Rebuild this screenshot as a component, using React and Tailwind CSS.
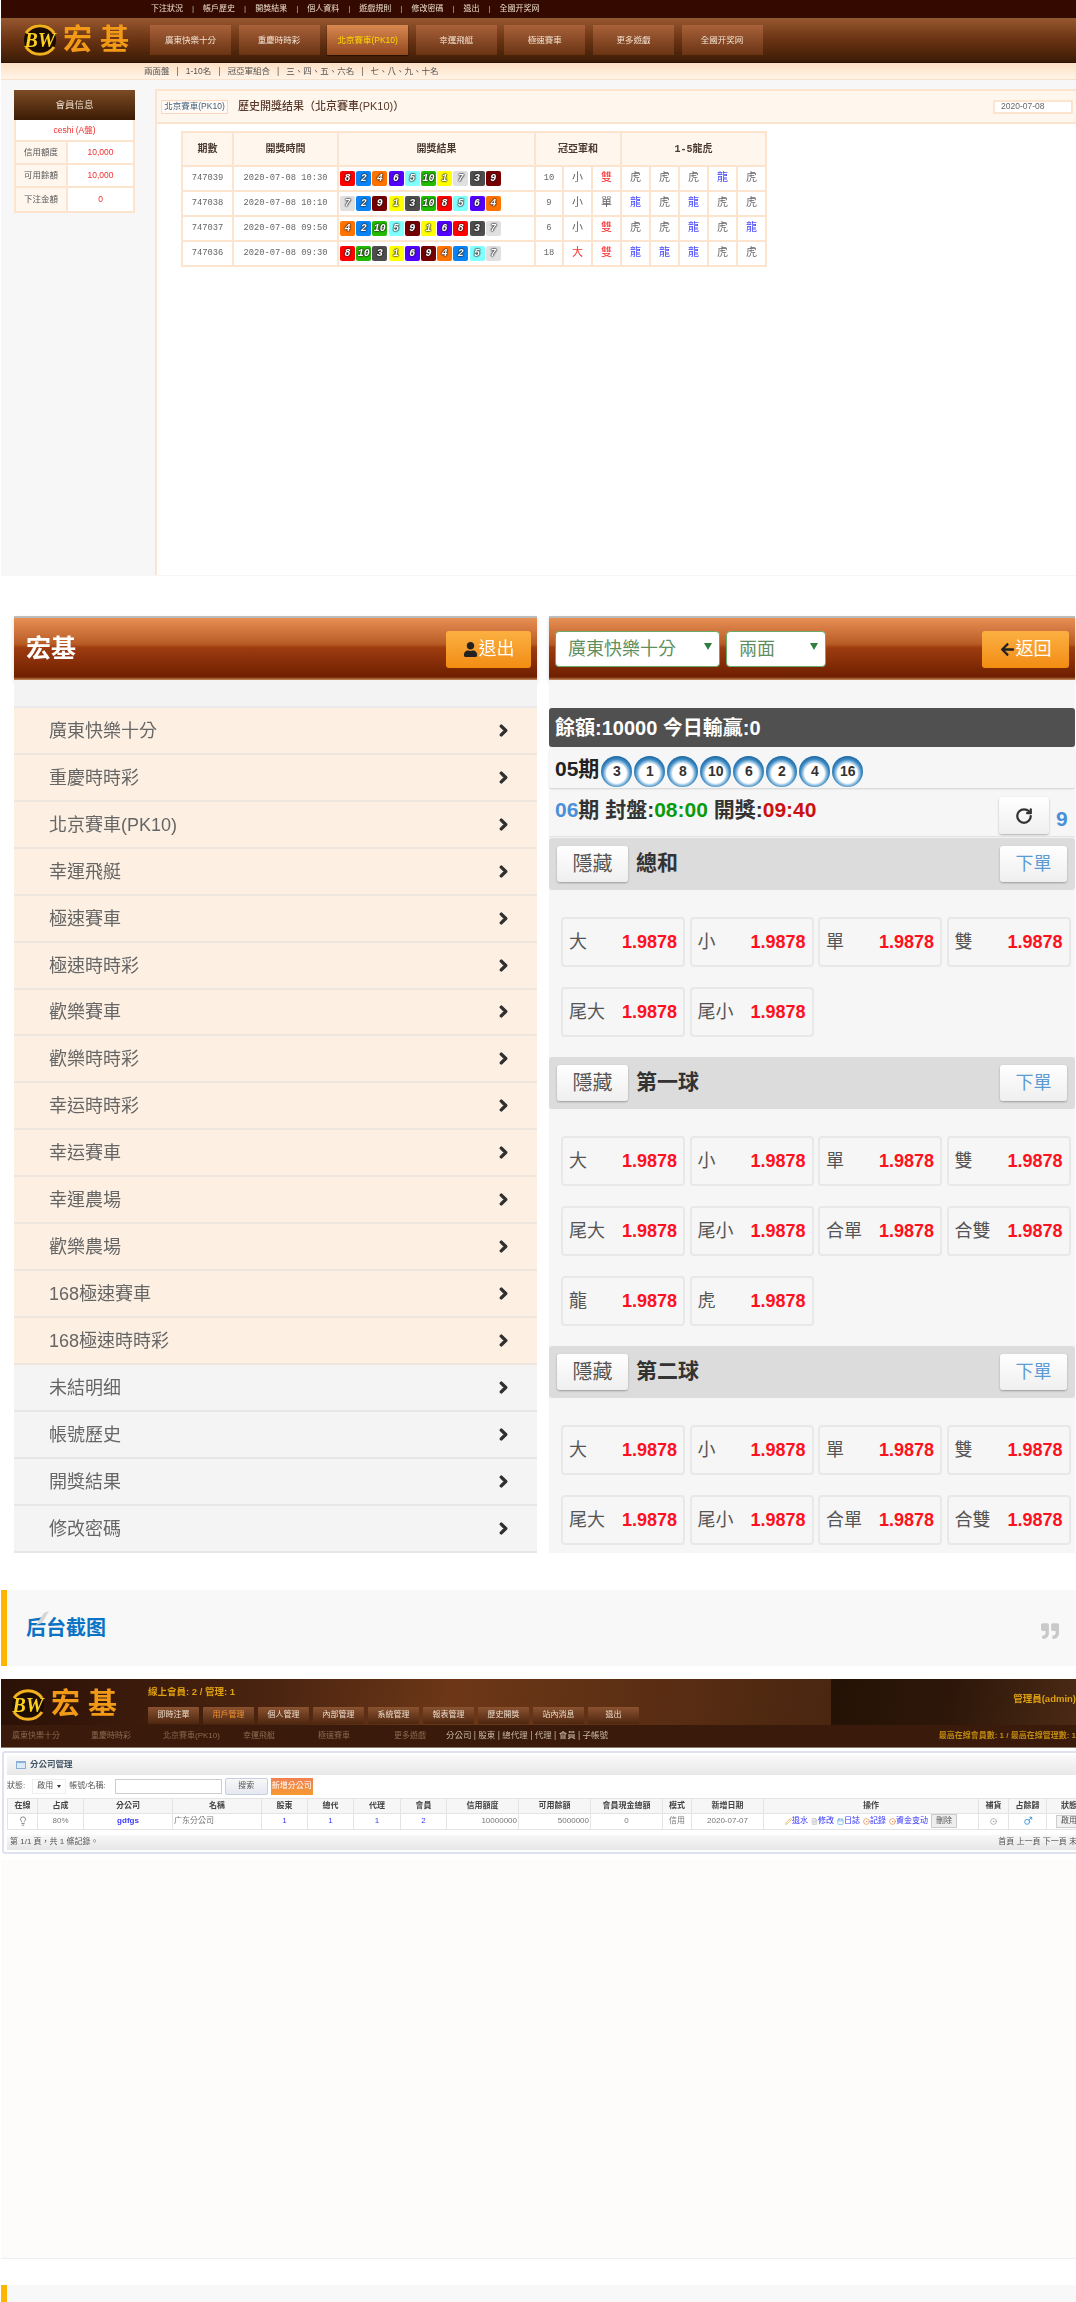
// App.jsx
import React from "react";
import { FaUser, FaArrowLeft, FaChevronRight, FaQuoteRight } from "react-icons/fa";
import { RotateCw, Lightbulb, Mars, Pencil, FileText, Calendar, CircleDot } from "lucide-react";

const BALL_COLORS = {
  1: "bg-[#ffff00]",
  2: "bg-[#0a84f5]",
  3: "bg-[#4d4d4d]",
  4: "bg-[#ff7300]",
  5: "bg-[#80ffff]",
  6: "bg-[#5200ff]",
  7: "bg-[#e0e0e0]",
  8: "bg-[#ff0000]",
  9: "bg-[#760000]",
  10: "bg-[#22bb00]",
};

const DRAWS = [
  { id: "747039", time: "2020-07-08 10:30", balls: [8, 2, 4, 6, 5, 10, 1, 7, 3, 9], sum: "10", size: "小", odd: "雙", dt: ["虎", "虎", "虎", "龍", "虎"] },
  { id: "747038", time: "2020-07-08 10:10", balls: [7, 2, 9, 1, 3, 10, 8, 5, 6, 4], sum: "9", size: "小", odd: "單", dt: ["龍", "虎", "龍", "虎", "虎"] },
  { id: "747037", time: "2020-07-08 09:50", balls: [4, 2, 10, 5, 9, 1, 6, 8, 3, 7], sum: "6", size: "小", odd: "雙", dt: ["虎", "虎", "龍", "虎", "龍"] },
  { id: "747036", time: "2020-07-08 09:30", balls: [8, 10, 3, 1, 6, 9, 4, 2, 5, 7], sum: "18", size: "大", odd: "雙", dt: ["龍", "龍", "龍", "虎", "虎"] },
];

const TOP_LINKS = ["下注狀況", "帳戶歷史", "開獎結果", "個人資料", "遊戲規則", "修改密碼", "退出", "全國开奖网"];
const NAV = ["廣東快樂十分", "重慶時時彩", "北京賽車(PK10)", "幸運飛艇", "極速賽車", "更多遊戲", "全國开奖网"];
const SUB_NAV = ["兩面盤", "1-10名", "冠亞軍組合", "三、四、五、六名", "七、八、九、十名"];

const MENU = [
  "廣東快樂十分", "重慶時時彩", "北京賽車(PK10)", "幸運飛艇", "極速賽車", "極速時時彩", "歡樂賽車",
  "歡樂時時彩", "幸运時時彩", "幸运賽車", "幸運農場", "歡樂農場", "168極速賽車", "168極速時時彩",
];
const MENU_GREY = ["未結明细", "帳號歷史", "開獎結果", "修改密碼"];

const ADMIN_NAV = ["即時注單", "用戶管理", "個人管理", "內部管理", "系統管理", "報表管理", "歷史開獎", "站內消息", "退出"];

function Logo({ size = 36, textClass }) {
  return (
    <div className="flex items-center gap-[5px]">
      <svg width={size} height={size} viewBox="0 0 36 36" className="shrink-0">
        <circle cx="18" cy="18" r="16" fill="#1a0c02" />
        <path d="M4 11 A17 17 0 0 1 32 11" fill="none" stroke="#f2b01e" strokeWidth="3" />
        <path d="M4 25 A17 17 0 0 0 32 25" fill="none" stroke="#f2b01e" strokeWidth="3" />
        <text x="18" y="25" textAnchor="middle" fontSize="20" fontWeight="700" fontStyle="italic" fill="#fbd01e" fontFamily="Liberation Serif, serif">BW</text>
      </svg>
      <span className={textClass}>宏 基</span>
    </div>
  );
}

function Ball({ n }) {
  return (
    <span className={`flex h-[15px] w-[15px] items-center justify-center rounded-[2px] text-[10px] font-bold italic text-white [text-shadow:0_0_1px_#000,0_0_2px_#222,0_0_2px_#222] ${BALL_COLORS[n]}`}>
      {n}
    </span>
  );
}

function HistoryTable() {
  const cell = "border-2 border-[#fde4ce] text-center";
  return (
    <table className="ml-[24px] mt-[7px] w-[584px] table-fixed border-collapse font-['Liberation_Mono','Noto_Sans_CJK_TC',monospace] text-[8.75px] text-[#666]">
      <colgroup>
        <col className="w-[51px]" />
        <col className="w-[105px]" />
        <col className="w-[197px]" />
        <col className="w-[28px]" />
        <col className="w-[29px]" />
        <col className="w-[29px]" />
        <col className="w-[29px]" />
        <col className="w-[29px]" />
        <col className="w-[29px]" />
        <col className="w-[29px]" />
        <col className="w-[29px]" />
      </colgroup>
      <thead>
        <tr className="h-[34px] bg-[#fff6ee] text-[10px] font-bold text-[#4a3a30]">
          <th className={cell}>期數</th>
          <th className={cell}>開獎時間</th>
          <th className={cell}>開獎結果</th>
          <th className={cell} colSpan={3}>冠亞軍和</th>
          <th className={cell} colSpan={5}>1-5龍虎</th>
        </tr>
      </thead>
      <tbody>
        {DRAWS.map((d) => (
          <tr key={d.id} className="h-[25px] bg-white">
            <td className={cell}>{d.id}</td>
            <td className={cell}>{d.time}</td>
            <td className={cell}>
              <div className="flex gap-[1.2px] pl-[1px]">
                {d.balls.map((b) => (
                  <Ball key={b} n={b} />
                ))}
              </div>
            </td>
            <td className={cell}>{d.sum}</td>
            <td className={`${cell} text-[11px] ${d.size === "大" ? "text-[#ff3030]" : ""}`}>{d.size}</td>
            <td className={`${cell} text-[11px] ${d.odd === "雙" ? "text-[#ff3030]" : ""}`}>{d.odd}</td>
            {d.dt.map((x, i) => (
              <td key={i} className={`${cell} text-[11px] ${x === "龍" ? "text-[#4a4aff]" : ""}`}>{x}</td>
            ))}
          </tr>
        ))}
      </tbody>
    </table>
  );
}

function SiteShot() {
  return (
    <section className="ml-px h-[576px] bg-[#f7f7f7] blur-[0.4px]">
      <div className="flex h-[17px] items-center gap-[9px] bg-[#340a00] pl-[150px] text-[8px] text-[#ecdcc8]">
        {TOP_LINKS.map((l, i) => (
          <React.Fragment key={l}>
            {i > 0 && <span className="text-[#bba]">|</span>}
            <span>{l}</span>
          </React.Fragment>
        ))}
      </div>

      <div className="flex h-[46px] items-center border-y border-[#2c1003] bg-gradient-to-b from-[#97582f] via-[#6a3313] to-[#3c1c06] pl-[21px]">
        <div className="w-[128px]">
          <Logo textClass="text-[29px] leading-none font-bold text-[#f29a18]" />
        </div>
        <div className="flex gap-[7.6px]">
          {NAV.map((n, i) =>
            i === 2 ? (
              <div key={n} className="flex h-[30px] w-[81px] items-center justify-center bg-gradient-to-b from-[#d98850] to-[#93491f] text-[8.5px] text-[#ffd800] shadow-[0_1px_1px_#2a1000]">{n}</div>
            ) : (
              <div key={n} className="flex h-[30px] w-[81px] items-center justify-center bg-gradient-to-b from-[#a9623a] to-[#6a3414] text-[8.5px] text-[#f3e2d2]">{n}</div>
            ),
          )}
        </div>
      </div>

      <div className="flex h-[17px] items-center gap-[7px] border-b border-[#fbe0c8] bg-gradient-to-b from-[#fde0c4] to-[#fff4e8] pl-[143px] text-[8.5px] text-[#555]">
        {SUB_NAV.map((l, i) => (
          <React.Fragment key={l}>
            {i > 0 && <span>|</span>}
            <span>{l}</span>
          </React.Fragment>
        ))}
      </div>

      <div className="flex">
        <aside className="w-[154px] pl-[13px] pt-[10px]">
          <div className="w-[121px] border-x-2 border-b-2 border-[#fde4ce] text-[8.5px]">
            <div className="-mx-[2px] flex h-[30px] items-center justify-center bg-gradient-to-b from-[#7d4c24] to-[#3c1c06] text-[9.5px] text-[#eadccc]">會員信息</div>
            <div className="flex h-[22px] items-center justify-center border-b-2 border-[#fde4ce] bg-white text-[#f03030]">ceshi (A盤)</div>
            {[["信用額度", "10,000"], ["可用餘額", "10,000"], ["下注金額", "0"]].map(([k, v], i) => (
              <div key={k} className={`grid h-[23px] grid-cols-[52px_1fr] ${i < 2 ? "border-b-2 border-[#fde4ce]" : ""}`}>
                <div className="flex items-center justify-center border-r-2 border-[#fde4ce] bg-[#fff6ee] text-[#555]">{k}</div>
                <div className="flex items-center justify-center bg-white text-[#f03030]">{v}</div>
              </div>
            ))}
          </div>
        </aside>

        <main className="mt-[9px] h-[486px] flex-1 border-l-2 border-t-2 border-[#fde4ce] bg-white">
          <div className="flex h-[33px] items-center border-b-2 border-[#fde4ce] bg-[#fff6ee] pl-[4px] pr-[3px]">
            <span className="flex h-[14px] w-[67px] items-center justify-center border border-[#fbd8bc] bg-[#fffaf5] text-[8.5px] text-[#3f5f7f]">北京賽車(PK10)</span>
            <span className="ml-[10px] text-[11px] font-medium text-[#5a3a2a]">歷史開獎结果（北京賽車(PK10)）</span>
            <span className="ml-auto flex h-[14px] w-[80px] items-center border-2 border-[#fde4ce] bg-white pl-[6px] text-[8.5px] text-[#666]">2020-07-08</span>
          </div>
          <HistoryTable />
        </main>
      </div>
    </section>
  );
}

function MobileHeader({ children }) {
  return (
    <div className="flex h-[64px] items-center justify-between border-t-2 border-[#bdbdbd] bg-[linear-gradient(#e88f55,#b85c26_42%,#9e3c10_48%,#6e1f00_95%,#c89060)] shadow-[0_2px_4px_rgba(0,0,0,0.15)]">
      {children}
    </div>
  );
}

function OrangeButton({ children, className = "" }) {
  return (
    <div className={`flex h-[37px] items-center justify-center gap-px rounded-[3px] bg-gradient-to-b from-[#fbb040] to-[#f28c0f] text-[18px] text-white ${className}`}>
      {children}
    </div>
  );
}

function MenuRow({ label, grey }) {
  return (
    <div className={`flex h-[46.93px] items-center justify-between border-b-2 pl-[35px] pr-[27px] text-[18px] text-[#666] ${grey ? "border-[#e6e6e6] bg-[#f4f4f4]" : "border-[#efe7dd] bg-[#fdf0e3]"}`}>
      <span className="pt-[2px]">{label}</span>
      <FaChevronRight size={13} stroke="currentColor" strokeWidth={50} className="text-[#2f2f2f]" />
    </div>
  );
}

function OddsCell({ label }) {
  return (
    <div className="flex h-[50px] items-center justify-between rounded-[4px] border-2 border-[#e8e8e8] bg-[#f6f6f6] pl-[6px] pr-[6px] text-[18px] text-[#555]">
      <span>{label}</span>
      <span className="font-bold text-[#ff1020]">1.9878</span>
    </div>
  );
}

function BetGroup({ title, items, className }) {
  return (
    <div className={className}>
      <div className="flex h-[52px] items-center rounded-[3px] bg-[#dcdcdc] pl-[8px] pr-[8px]">
        <div className="flex h-[36px] w-[71px] items-center justify-center rounded-[3px] bg-gradient-to-b from-white to-[#efefef] text-[20px] text-[#555] shadow-[0_1px_2px_rgba(0,0,0,0.3)]">隱藏</div>
        <span className="ml-[8px] -mt-[2px] text-[21px] font-bold text-[#333]">{title}</span>
        <div className="ml-auto flex h-[36px] w-[67px] items-center justify-center rounded-[3px] bg-gradient-to-b from-white to-[#efefef] text-[18px] text-[#5b9bd5] shadow-[0_1px_2px_rgba(0,0,0,0.3)]">下單</div>
      </div>
      <div className="ml-[12px] mt-[27px] grid grid-cols-[repeat(4,124px)] gap-x-[4.5px] gap-y-[20px]">
        {items.map((x) => (
          <OddsCell key={x} label={x} />
        ))}
      </div>
    </div>
  );
}

function SelectBox({ label, className }) {
  return (
    <div className={`flex h-[36px] items-center justify-between rounded-[4px] border border-[#6aaa6a] bg-white pl-[12px] pr-[7px] text-[18px] text-[#5f8f5f] ${className}`}>
      <span>{label}</span>
      <span className="mb-[6px] h-0 w-0 border-x-[4px] border-t-[7px] border-x-transparent border-t-[#2f7f3f]" />
    </div>
  );
}

function MobileShot() {
  const base = ["大", "小", "單", "雙", "尾大", "尾小"];
  const ball = [...base, "合單", "合雙"];
  return (
    <section className="flex gap-[12px] pb-[37px] pl-[14px] pt-[40px] blur-[0.3px]">
      <div className="w-[523px]">
        <MobileHeader>
          <span className="pl-[12px] text-[25px] font-bold text-white">宏基</span>
          <OrangeButton className="mr-[6px] w-[85px]">
            <FaUser size={15} className="text-[#222]" />
            退出
          </OrangeButton>
        </MobileHeader>
        <div className="h-[28px] border-b-2 border-[#e9e9e9] bg-[#f3f3f3]" />
        {MENU.map((m) => (
          <MenuRow key={m} label={m} />
        ))}
        {MENU_GREY.map((m) => (
          <MenuRow key={m} label={m} grey />
        ))}
      </div>

      <div className="w-[526px] bg-[#f6f6f6]">
        <MobileHeader>
          <div className="flex gap-[6px] pl-[6px]">
            <SelectBox label="廣東快樂十分" className="w-[165px]" />
            <SelectBox label="兩面" className="w-[100px]" />
          </div>
          <OrangeButton className="mr-[6px] w-[87px]">
            <FaArrowLeft size={15} className="text-[#222]" />
            返回
          </OrangeButton>
        </MobileHeader>
        <div className="h-[28px] bg-[#f6f6f6]" />
        <div className="flex h-[39px] items-center rounded-[3px] bg-[#505050] pl-[6px] text-[20px] font-bold text-white">餘額:10000 今日輸贏:0</div>
        <div className="mt-[3px] flex h-[38px] items-start rounded-[2px] bg-[#f6f6f6] pl-[6px] pt-[3px] text-[21px] font-bold text-[#222] shadow-[0_1px_2px_rgba(0,0,0,0.15)]">
          <span>05期</span>
          <div className="ml-[2px] mt-[3px] flex gap-[2px]">
            {[3, 1, 8, 10, 6, 2, 4, 16].map((n) => (
              <span key={n} className="flex h-[31px] w-[31px] items-center justify-center rounded-full bg-[radial-gradient(circle_at_50%_56%,#fff_42%,#b8d6ec_48%,#3f8cc4_60%,#1f6aa5_72%)] text-[14px] font-bold text-[#333]">{n}</span>
            ))}
          </div>
        </div>
        <div className="mt-[3px] flex h-[45px] items-start pl-[6px] pr-[6px] pt-[3px] text-[21px] font-bold text-[#333] shadow-[0_1px_1px_rgba(0,0,0,0.08)]">
          <span className="text-[#4a90d9]">06</span>
          <span>期 封盤:</span>
          <span className="text-[#0a9a0a]">08:00</span>
          <span>&nbsp;開獎:</span>
          <span className="text-[#cc1010]">09:40</span>
          <div className="ml-auto mt-[3px] flex h-[37px] w-[50px] items-center justify-center rounded-[3px] bg-gradient-to-b from-white to-[#efefef] shadow-[0_1px_2px_rgba(0,0,0,0.3)]">
            <RotateCw size={18} strokeWidth={3} className="text-[#333]" />
          </div>
          <span className="ml-[7px] mt-[9px] w-[13px] text-[#4a90d9]">9</span>
        </div>
        <BetGroup title="總和" items={base} className="mt-[2px] pb-[20px]" />
        <BetGroup title="第一球" items={[...ball, "龍", "虎"]} className="pb-[20px]" />
        <BetGroup title="第二球" items={ball} className="pb-[7px]" />
      </div>
    </section>
  );
}

function SectionTitle() {
  return (
    <div className="ml-px flex h-[76px] items-center border-l-[6px] border-[#ffb400] bg-[#f8f8f8] pr-[17px]">
      <h2 className="relative ml-[19px] mt-[1px] text-[20px] font-bold text-[#0b72c4]">
        后台截图
        {/* grey stroke lying over the first character */}
        <svg width="18" height="16" viewBox="0 0 18 16" className="absolute -top-[3px] left-[8px]">
          <path d="M2 15 L10 3 L15 1 L8 13 Z" fill="#d5d5d5" />
        </svg>
      </h2>
      <FaQuoteRight size={18} className="ml-auto mt-[6px] text-[#c9c9c9]" />
    </div>
  );
}

function OpLink({ icon, children }) {
  return (
    <span className="inline-flex items-center text-[#3333ff]">
      {icon}
      {children}
    </span>
  );
}

function AdminTable() {
  const th = "border border-[#e4e4e4] font-bold text-[#444]";
  const td = "border border-[#e4e4e4] text-center";
  const link = "text-[#3a3aff]";
  const widths = ["w-[30px]", "w-[46px]", "w-[89px]", "w-[89px]", "w-[46px]", "w-[46px]", "w-[47px]", "w-[46px]", "w-[72px]", "w-[72px]", "w-[72px]", "w-[29px]", "w-[72px]", "w-[215px]", "w-[30px]", "w-[38px]", "w-[45px]"];
  const heads = ["在線", "占成", "分公司", "名稱", "股東", "總代", "代理", "會員", "信用額度", "可用餘額", "會員現金總額", "模式", "新增日期", "操作", "補貨", "占餘歸", "狀態"];
  return (
    <table className="w-[1084px] table-fixed border-collapse text-[8px] text-[#777]">
      <colgroup>
        {widths.map((w, i) => (
          <col key={i} className={w} />
        ))}
      </colgroup>
      <thead>
        <tr className="h-[15px] bg-[#f6f6f6]">
          {heads.map((h) => (
            <th key={h} className={th}>{h}</th>
          ))}
        </tr>
      </thead>
      <tbody>
        <tr className="h-[16px]">
          <td className={td}><Lightbulb size={10} className="mx-auto" /></td>
          <td className={td}>80%</td>
          <td className={`${td} font-bold ${link}`}>gdfgs</td>
          <td className="border border-[#e4e4e4] pl-px">广东分公司</td>
          <td className={`${td} ${link}`}>1</td>
          <td className={`${td} ${link}`}>1</td>
          <td className={`${td} ${link}`}>1</td>
          <td className={`${td} ${link}`}>2</td>
          <td className="border border-[#e4e4e4] pr-px text-right">10000000</td>
          <td className="border border-[#e4e4e4] pr-px text-right">5000000</td>
          <td className={td}>0</td>
          <td className={td}>信用</td>
          <td className={td}>2020-07-07</td>
          <td className={td}>
            <div className="flex items-center justify-center gap-[3px]">
              <OpLink icon={<Pencil size={7} className="text-[#e0a030]" />}>退水</OpLink>
              <OpLink icon={<FileText size={7} className="text-[#aaa]" />}>修改</OpLink>
              <OpLink icon={<Calendar size={7} className="text-[#4aa0e0]" />}>日誌</OpLink>
              <OpLink icon={<CircleDot size={7} className="text-[#f07020]" />}>記錄</OpLink>
              <OpLink icon={<CircleDot size={7} className="text-[#f07020]" />}>資金变动</OpLink>
              <span className="flex h-[14px] w-[26px] items-center justify-center border border-[#ccc] bg-[#eee] text-[#555]">刪除</span>
            </div>
          </td>
          <td className={td}><CircleDot size={7} className="mx-auto text-[#888]" /></td>
          <td className={td}><Mars size={10} className="mx-auto text-[#2a90e0]" /></td>
          <td className={td}>
            <span className="mx-auto flex h-[13px] w-[26px] items-center justify-center border border-[#ccc] bg-[#f2f2f2] text-[#555]">啟用</span>
          </td>
        </tr>
      </tbody>
    </table>
  );
}

function AdminShot() {
  return (
    <section className="ml-px mt-[13px] h-[178px] overflow-hidden blur-[0.4px]">
      <div className="relative h-[46px] bg-[linear-gradient(100deg,#2a1006,#4a2410_25%,#6d3717_42%,#4a2610_77%)] pl-[9px] pt-[8px]">
        <div className="absolute bottom-0 right-0 top-0 w-[245px] bg-[linear-gradient(100deg,#241206,#2e1709_50%,#4a2a15)]" />
        <div className="relative flex">
          <div className="w-[138px]">
            <Logo size={36} textClass="text-[29px] leading-none font-bold text-[#f29a18]" />
          </div>
          <div>
            <div className="h-[9px] text-[9.5px] font-bold leading-[9px] text-[#dfa010]">線上會員: 2 / 管理: 1</div>
            <div className="mt-[11px] flex gap-[4px]">
              {ADMIN_NAV.map((n) => (
                <span key={n} className={`flex h-[17px] w-[51px] items-center justify-center rounded-[1px] bg-gradient-to-b from-[#8a5230] to-[#4e2710] text-[8px] ${n === "用戶管理" ? "text-[#f09030]" : "text-[#eadccc]"}`}>{n}</span>
              ))}
            </div>
          </div>
          <span className="absolute right-0 top-[5px] text-[9.5px] font-bold text-[#dfa010]">管理員(admin)</span>
        </div>
      </div>
      <div className="flex h-[23px] items-center border-b border-[#8a7a6a] bg-[#3a1a0a] text-[8px] text-[#8a6a50]">
        <span className="ml-[11px]">廣東快樂十分</span>
        <span className="ml-[31px]">重慶時時彩</span>
        <span className="ml-[32px]">北京賽車(PK10)</span>
        <span className="ml-[23px]">幸運飛艇</span>
        <span className="ml-[43px]">極速賽車</span>
        <span className="ml-[44px]">更多遊戲</span>
        <span className="ml-[20px] text-[8.5px] text-[#c8b8a8]">分公司 | 股東 | 總代理 | 代理 | 會員 | 子帳號</span>
        <span className="ml-auto whitespace-nowrap font-bold text-[#c08a10]">最高在線會員數: 1 / 最高在線管理數: 1</span>
      </div>
      <div className="mt-[3px] ml-px h-[103px] w-[1100px] rounded-[3px] border-2 border-[#dde2ee] bg-white pl-[3px] pt-[2px]">
        <div className="flex h-[20px] items-center bg-gradient-to-b from-[#fafafa] to-[#e8e8e8] pl-[9px] text-[8.5px] font-bold text-[#456]">
          <span className="mr-[4px] h-[8px] w-[10px] border border-[#8ab0d8] border-t-[2px] bg-[#dcebf8]" />
          分公司管理
        </div>
        <div className="flex h-[23px] items-center text-[8px] text-[#555]">
          <span>狀態:</span>
          <span className="ml-[7px] flex h-[15px] w-[34px] items-center justify-between border border-[#eee] px-[4px]">
            啟用
            <span className="h-0 w-0 border-x-[2px] border-t-[3px] border-x-transparent border-t-[#333]" />
          </span>
          <span className="ml-[3px]">帳號/名稱:</span>
          <span className="ml-[9px] h-[15px] w-[107px] border border-[#ccc] bg-white" />
          <span className="ml-[3px] flex h-[17px] w-[43px] items-center justify-center rounded-[2px] border border-[#c4d0e0] bg-gradient-to-b from-[#f8f8f8] to-[#e4e8f0]">搜索</span>
          <span className="ml-[3px] flex h-[17px] w-[42px] items-center justify-center bg-gradient-to-b from-[#f08050] to-[#f59a30] text-white">新增分公司</span>
        </div>
        <AdminTable />
        <div className="mt-[5px] flex h-[15px] w-[1090px] items-center justify-between bg-gradient-to-b from-[#f8f8f8] to-[#e6e6e6] pl-[3px] pr-[12px] text-[8px] text-[#555]">
          <span>第 1/1 頁，共 1 條記錄。</span>
          <span>首頁 上一頁 下一頁 末頁</span>
        </div>
      </div>
    </section>
  );
}

export default function App() {
  return (
    <div className="h-[2302px] w-[1076px] overflow-hidden bg-white [font-family:'Liberation_Sans','Noto_Sans_CJK_TC',sans-serif]">
      <SiteShot />
      <MobileShot />
      <SectionTitle />
      <AdminShot />
      <div className="ml-px mt-[3px] h-[399px] border-b border-[#efefef] bg-[#fdfcfa]" />
      <div className="ml-px mt-[26px] h-[20px] border-l-[6px] border-[#ffb400] bg-[#f8f8f8]" />
    </div>
  );
}
